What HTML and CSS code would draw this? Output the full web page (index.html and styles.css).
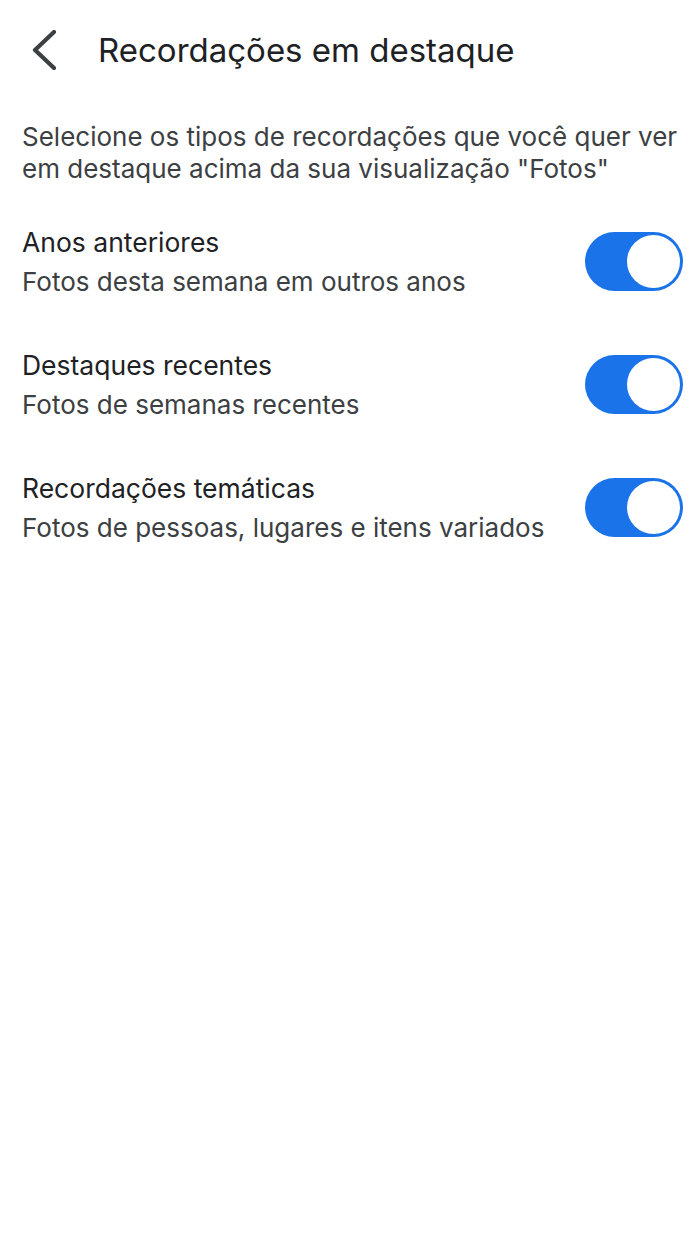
FILE: index.html
```html
<!DOCTYPE html>
<html lang="pt-BR">
<head>
<meta charset="utf-8">
<link rel="stylesheet" href="styles.css">
</head>
<body>
<header class="topbar">
  <button class="back" aria-label="Voltar">
    <svg width="24" height="40" viewBox="0 0 24 40"><path d="M22 2 L3 20 L22 38" fill="none" stroke="#3c4043" stroke-width="4.2" stroke-linecap="round" stroke-linejoin="round"/></svg>
  </button>
  <h1 class="title">Recordações em destaque</h1>
</header>
<main class="content">
  <p class="intro">Selecione os tipos de recordações que você quer ver em destaque acima da sua visualização "Fotos"</p>
  <ul class="options">
    <li class="option">
      <div class="texts">
        <div class="opt-title">Anos anteriores</div>
        <div class="opt-sub">Fotos desta semana em outros anos</div>
      </div>
      <span class="toggle"><span class="knob"></span></span>
    </li>
    <li class="option">
      <div class="texts">
        <div class="opt-title">Destaques recentes</div>
        <div class="opt-sub">Fotos de semanas recentes</div>
      </div>
      <span class="toggle"><span class="knob"></span></span>
    </li>
    <li class="option">
      <div class="texts">
        <div class="opt-title">Recordações temáticas</div>
        <div class="opt-sub">Fotos de pessoas, lugares e itens variados</div>
      </div>
      <span class="toggle"><span class="knob"></span></span>
    </li>
  </ul>
</main>
</body>
</html>
```
FILE: styles.css
```css
* { box-sizing: border-box; }
html, body { margin: 0; padding: 0; background: #fff; }
body { font-family: Inter, Roboto, sans-serif; color: #202124; width: 697px; }
.topbar {
  display: flex;
  align-items: center;
  height: 100px;
  padding-left: 32px;
}
.back {
  border: 0; background: none; padding: 0; margin: 0;
  width: 24px; height: 40px;
  display: flex;
}
.title {
  margin: 0 0 0 42px;
  font-size: 33px;
  font-weight: 400;
  color: #202124;
}
.content { padding: 0 14px 0 22px; }
.intro {
  margin: 21px 0 0;
  font-size: 26px;
  line-height: 32px;
  color: #3c4043;
}
.options { list-style: none; margin: 20px 0 0; padding: 0; }
.option {
  display: flex;
  align-items: center;
  justify-content: space-between;
  height: 123px;
  padding-bottom: 10px;
}
.opt-title { font-size: 26.5px; line-height: 39px; color: #202124; }
.opt-sub { font-size: 26px; line-height: 39px; color: #3c4043; }
.toggle {
  width: 98px; height: 59px;
  border-radius: 30px;
  background: #1a73e8;
  display: flex;
  align-items: center;
  justify-content: flex-end;
  padding-right: 3px;
}
.knob {
  width: 53px; height: 53px;
  border-radius: 50%;
  background: #fff;
}
```
